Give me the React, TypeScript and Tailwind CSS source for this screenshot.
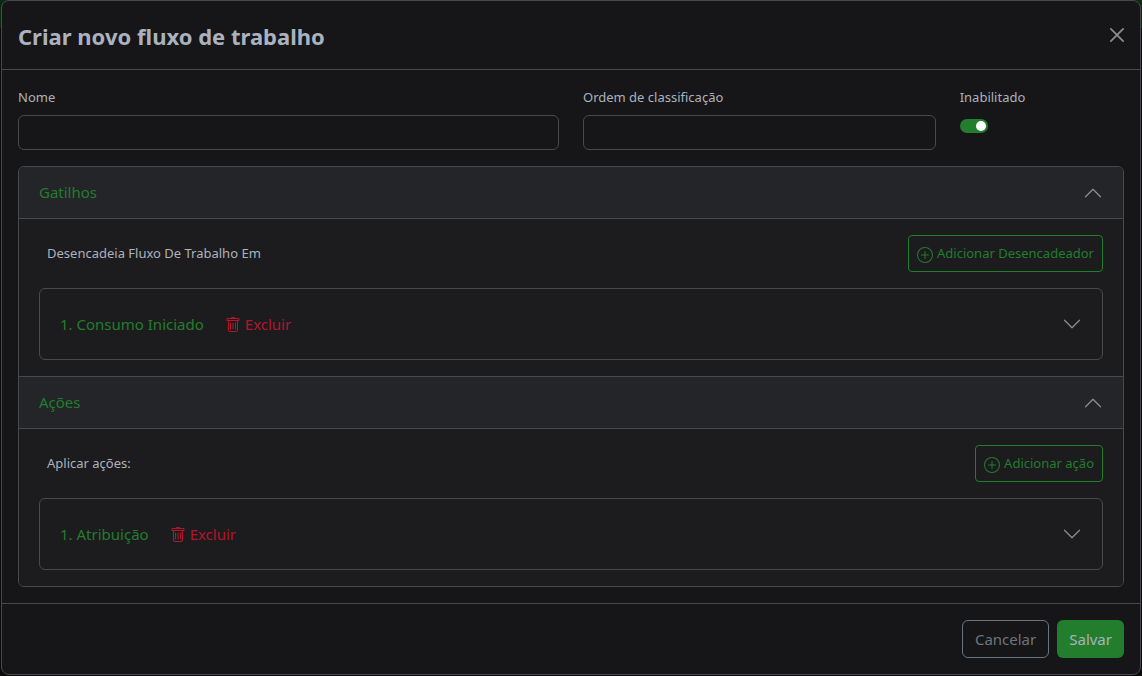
import { useState } from "react";
import type { ReactNode } from "react";
import { BsChevronDown, BsChevronUp, BsPlusCircle, BsTrash } from "react-icons/bs";

function CloseIcon() {
  return (
    <svg viewBox="0 0 16 16" fill="currentColor" className="size-3.5" aria-hidden="true">
      <path d="M.293.293a1 1 0 0 1 1.414 0L8 6.586 14.293.293a1 1 0 1 1 1.414 1.414L9.414 8l6.293 6.293a1 1 0 0 1-1.414 1.414L8 9.414l-6.293 6.293a1 1 0 0 1-1.414-1.414L6.586 8 .293 1.707a1 1 0 0 1 0-1.414z" />
    </svg>
  );
}

function AddButton({ children }: { children: ReactNode }) {
  return (
    <button
      type="button"
      className="flex h-[37px] items-center gap-1 rounded border border-[#227d2d] px-2 text-[13px] text-[#227d2d]"
    >
      <BsPlusCircle className="mt-0.5 size-4" />
      {children}
    </button>
  );
}

function Item({ title }: { title: string }) {
  return (
    <div className="flex h-18 items-center rounded-md border border-[#48494c] px-5">
      <span className="text-[15px] text-[#227d2d]">{title}</span>
      <button type="button" className="ml-[21px] flex items-center gap-1 text-[15px] text-[#b5142b]">
        <BsTrash className="mt-0.5 size-4" />
        Excluir
      </button>
      <button type="button" aria-label={title} className="ml-auto text-[#8b8c8e]">
        <BsChevronDown className="size-5" />
      </button>
    </div>
  );
}

function Section({
  title,
  label,
  action,
  item,
}: {
  title: string;
  label: string;
  action: string;
  item: string;
}) {
  const [open, setOpen] = useState(true);
  return (
    <section className="border-b border-[#48494c] last:border-b-0">
      <h5>
        <button
          type="button"
          aria-expanded={open}
          onClick={() => setOpen(!open)}
          className="flex h-[52px] w-full items-center justify-between border-b border-[#48494c] bg-[#242529] px-5 text-[15px] text-[#227d2d]"
        >
          {title}
          {open ? (
            <BsChevronUp className="size-5 text-[#8b8c8e]" />
          ) : (
            <BsChevronDown className="size-5 text-[#8b8c8e]" />
          )}
        </button>
      </h5>
      {open && (
        <div className="flex flex-col gap-4 bg-[#1c1c1e] px-5 py-4">
          <div className="flex items-center justify-between pl-2">
            <p className="text-[13px]">{label}</p>
            <AddButton>{action}</AddButton>
          </div>
          <Item title={item} />
        </div>
      )}
    </section>
  );
}

export default function App() {
  const [enabled, setEnabled] = useState(true);
  return (
    <div className="min-h-screen bg-[#0b0b0c] bg-[linear-gradient(#0b2a10,#0b2a10)] bg-[length:100%_28px] bg-no-repeat px-px pb-px font-['Noto_Sans','Open_Sans',sans-serif] text-[#abb2bf]">
      <form
        role="dialog"
        aria-labelledby="dialog-title"
        onSubmit={(e) => e.preventDefault()}
        className="rounded-lg border border-[#48494c] bg-[#161618]"
      >
        <header className="flex h-[69px] items-center justify-between border-b border-[#48494c] px-4">
          <h4 id="dialog-title" className="pt-0.5 text-[22px] font-bold">
            Criar novo fluxo de trabalho
          </h4>
          <button type="button" aria-label="Fechar" className="text-[#8b8c8e]">
            <CloseIcon />
          </button>
        </header>

        <div className="p-4">
          <div className="mb-4 grid grid-cols-12 gap-6">
            <div className="col-span-6">
              <label htmlFor="name" className="mb-1.5 block text-[13px] leading-[23px]">
                Nome
              </label>
              <input id="name" type="text" className="block h-[35px] w-full rounded-md border border-[#48494c] bg-transparent px-3" />
            </div>
            <div className="col-span-4">
              <label htmlFor="order" className="mb-1.5 block text-[13px] leading-[23px]">
                Ordem de classificação
              </label>
              <input id="order" type="text" className="block h-[35px] w-full rounded-md border border-[#48494c] bg-transparent px-3" />
            </div>
            <div className="col-span-2">
              <label htmlFor="enabled" className="mb-2.5 block text-[13px] leading-[23px]">
                Inabilitado
              </label>
              <input
                id="enabled"
                type="checkbox"
                role="switch"
                checked={enabled}
                onChange={(e) => setEnabled(e.target.checked)}
                className="flex h-3.5 w-7 appearance-none items-center rounded-full bg-[#48494c] px-0.5 before:size-2.5 before:rounded-full before:bg-white checked:justify-end checked:bg-[#227d2d]"
              />
            </div>
          </div>

          <div className="overflow-hidden rounded-md border border-[#48494c]">
            <Section
              title="Gatilhos"
              label="Desencadeia Fluxo De Trabalho Em"
              action="Adicionar Desencadeador"
              item="1. Consumo Iniciado"
            />
            <Section title="Ações" label="Aplicar ações:" action="Adicionar ação" item="1. Atribuição" />
          </div>
        </div>

        <footer className="flex justify-end gap-2 border-t border-[#48494c] p-4">
          <button type="button" className="h-[38px] rounded-md border border-[#6c757d] px-3 text-[15px] text-[#6c757d]">
            Cancelar
          </button>
          <button type="submit" className="h-[38px] rounded-md bg-[#227d2d] px-3 text-[15px]">
            Salvar
          </button>
        </footer>
      </form>
    </div>
  );
}
